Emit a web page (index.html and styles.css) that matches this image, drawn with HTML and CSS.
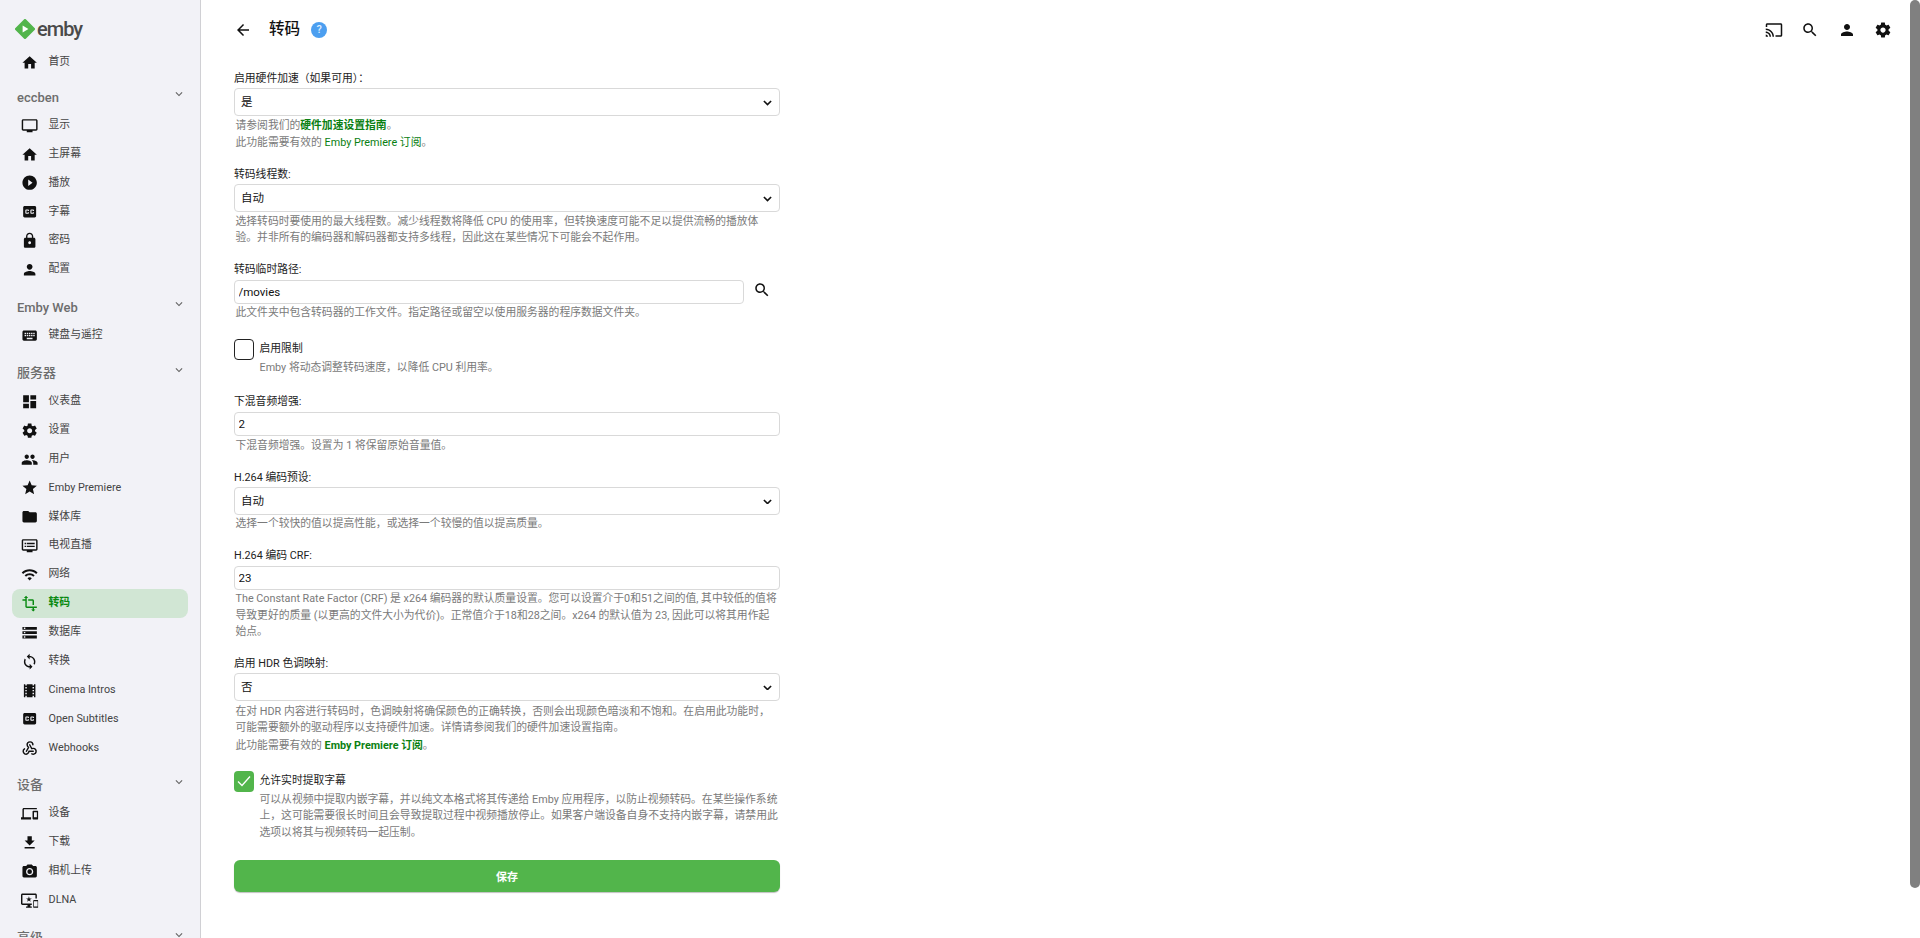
FILE: index.html
```html
<!DOCTYPE html>
<html lang="zh-CN">
<head>
<meta charset="utf-8">
<title>转码</title>
<link rel="stylesheet" href="styles.css">
</head>
<body>
<svg class="sprite" xmlns="http://www.w3.org/2000/svg">
<symbol id="i-home" viewBox="0 0 24 24"><path d="M10 20v-6h4v6h5v-8h3L12 3 2 12h3v8z"/></symbol>
<symbol id="i-tv" viewBox="0 0 24 24"><path d="M21 3H3c-1.1 0-2 .9-2 2v12c0 1.1.9 2 2 2h5v2h8v-2h5c1.1 0 1.99-.9 1.99-2L23 5c0-1.1-.9-2-2-2zm0 14H3V5h18v12z"/></symbol>
<symbol id="i-play" viewBox="0 0 24 24"><path d="M12 2C6.48 2 2 6.48 2 12s4.48 10 10 10 10-4.48 10-10S17.52 2 12 2zm-2 14.5v-9l6 4.5-6 4.5z"/></symbol>
<symbol id="i-cc" viewBox="0 0 24 24"><path d="M19 4H5c-1.11 0-2 .9-2 2v12c0 1.1.89 2 2 2h14c1.1 0 2-.9 2-2V6c0-1.1-.9-2-2-2zm-8 7H9.5v-.5h-2v3h2V13H11v1c0 .55-.45 1-1 1H7c-.55 0-1-.45-1-1v-4c0-.55.45-1 1-1h3c.55 0 1 .45 1 1v1zm7 0h-1.5v-.5h-2v3h2V13H18v1c0 .55-.45 1-1 1h-3c-.55 0-1-.45-1-1v-4c0-.55.45-1 1-1h3c.55 0 1 .45 1 1v1z"/></symbol>
<symbol id="i-lock" viewBox="0 0 24 24"><path d="M18 8h-1V6c0-2.76-2.24-5-5-5S7 3.24 7 6v2H6c-1.1 0-2 .9-2 2v10c0 1.1.9 2 2 2h12c1.1 0 2-.9 2-2V10c0-1.1-.9-2-2-2zm-6 9c-1.1 0-2-.9-2-2s.9-2 2-2 2 .9 2 2-.9 2-2 2zm3.1-9H8.9V6c0-1.71 1.39-3.1 3.1-3.1 1.71 0 3.1 1.39 3.1 3.1v2z"/></symbol>
<symbol id="i-person" viewBox="0 0 24 24"><path d="M12 12c2.21 0 4-1.79 4-4s-1.79-4-4-4-4 1.79-4 4 1.79 4 4 4zm0 2c-2.67 0-8 1.34-8 4v2h16v-2c0-2.66-5.33-4-8-4z"/></symbol>
<symbol id="i-keyboard" viewBox="0 0 24 24"><path d="M20 5H4c-1.1 0-1.99.9-1.99 2L2 17c0 1.1.9 2 2 2h16c1.1 0 2-.9 2-2V7c0-1.1-.9-2-2-2zm-9 3h2v2h-2V8zm0 3h2v2h-2v-2zM8 8h2v2H8V8zm0 3h2v2H8v-2zm-1 2H5v-2h2v2zm0-3H5V8h2v2zm9 7H8v-2h8v2zm0-4h-2v-2h2v2zm0-3h-2V8h2v2zm3 3h-2v-2h2v2zm0-3h-2V8h2v2z"/></symbol>
<symbol id="i-dashboard" viewBox="0 0 24 24"><path d="M3 13h8V3H3v10zm0 8h8v-6H3v6zm10 0h8V11h-8v10zm0-18v6h8V3h-8z"/></symbol>
<symbol id="i-settings" viewBox="0 0 24 24"><path d="M19.43 12.98c.04-.32.07-.64.07-.98s-.03-.66-.07-.98l2.11-1.65c.19-.15.24-.42.12-.64l-2-3.46c-.12-.22-.39-.3-.61-.22l-2.49 1c-.52-.4-1.08-.73-1.69-.98l-.38-2.65C14.46 2.18 14.25 2 14 2h-4c-.25 0-.46.18-.49.42l-.38 2.65c-.61.25-1.17.59-1.69.98l-2.49-1c-.23-.09-.49 0-.61.22l-2 3.46c-.13.22-.07.49.12.64l2.11 1.65c-.04.32-.07.65-.07.98s.03.66.07.98l-2.11 1.65c-.19.15-.24.42-.12.64l2 3.46c.12.22.39.3.61.22l2.49-1c.52.4 1.08.73 1.69.98l.38 2.65c.03.24.24.42.49.42h4c.25 0 .46-.18.49-.42l.38-2.65c.61-.25 1.17-.59 1.69-.98l2.49 1c.23.09.49 0 .61-.22l2-3.46c.12-.22.07-.49-.12-.64l-2.11-1.65zM12 15.5c-1.93 0-3.5-1.57-3.5-3.5s1.57-3.5 3.5-3.5 3.5 1.57 3.5 3.5-1.57 3.5-3.5 3.5z"/></symbol>
<symbol id="i-people" viewBox="0 0 24 24"><path d="M16 11c1.66 0 2.99-1.34 2.99-3S17.66 5 16 5c-1.66 0-3 1.34-3 3s1.34 3 3 3zm-8 0c1.66 0 2.99-1.34 2.99-3S9.66 5 8 5C6.34 5 5 6.34 5 8s1.34 3 3 3zm0 2c-2.33 0-7 1.17-7 3.5V19h14v-2.5c0-2.33-4.67-3.5-7-3.5zm8 0c-.29 0-.62.02-.97.05 1.16.84 1.97 1.97 1.97 3.45V19h6v-2.5c0-2.33-4.67-3.5-7-3.5z"/></symbol>
<symbol id="i-star" viewBox="0 0 24 24"><path d="M12 17.27L18.18 21l-1.64-7.03L22 9.24l-7.19-.61L12 2 9.19 8.63 2 9.24l5.46 4.73L5.82 21z"/></symbol>
<symbol id="i-folder" viewBox="0 0 24 24"><path d="M10 4H4c-1.1 0-1.99.9-1.99 2L2 18c0 1.1.9 2 2 2h16c1.1 0 2-.9 2-2V8c0-1.1-.9-2-2-2h-8l-2-2z"/></symbol>
<symbol id="i-dvr" viewBox="0 0 24 24"><path d="M21 3H3c-1.1 0-2 .9-2 2v12c0 1.1.9 2 2 2h5v2h8v-2h5c1.1 0 1.99-.9 1.99-2L23 5c0-1.1-.9-2-2-2zm0 14H3V5h18v12zm-2-9H8v2h11V8zm0 4H8v2h11v-2zM7 8H5v2h2V8zm0 4H5v2h2v-2z"/></symbol>
<symbol id="i-wifi" viewBox="0 0 24 24"><path d="M1 9l2 2c4.97-4.97 13.03-4.97 18 0l2-2C16.93 2.93 7.08 2.93 1 9zm8 8l3 3 3-3c-1.65-1.66-4.34-1.66-6 0zm-4-4l2 2c2.76-2.76 7.24-2.76 10 0l2-2C15.14 9.14 8.87 9.14 5 13z"/></symbol>
<symbol id="i-transform" viewBox="0 0 24 24"><path d="M22 18v-2H8V4h2L7 1 4 4h2v2H2v2h4v8c0 1.1.9 2 2 2h8v2h-2l3 3 3-3h-2v-2h4zM10 8h6v6h2V8c0-1.1-.9-2-2-2h-6v2z"/></symbol>
<symbol id="i-storage" viewBox="0 0 24 24"><path d="M2 20h20v-4H2v4zm2-3h2v2H4v-2zM2 4v4h20V4H2zm4 3H4V5h2v2zm-4 7h20v-4H2v4zm2-3h2v2H4v-2z"/></symbol>
<symbol id="i-sync" viewBox="0 0 24 24"><path d="M12 4V1L8 5l4 4V6c3.31 0 6 2.69 6 6 0 1.01-.25 1.97-.7 2.8l1.46 1.46C19.54 15.03 20 13.57 20 12c0-4.42-3.58-8-8-8zm0 14c-3.31 0-6-2.69-6-6 0-1.01.25-1.97.7-2.8L5.24 7.74C4.46 8.97 4 10.43 4 12c0 4.42 3.58 8 8 8v3l4-4-4-4v3z"/></symbol>
<symbol id="i-movie" viewBox="0 0 24 24"><path d="M18 3v2h-2V3H8v2H6V3H4v18h2v-2h2v2h8v-2h2v2h2V3h-2zM8 17H6v-2h2v2zm0-4H6v-2h2v2zm0-4H6V7h2v2zm10 8h-2v-2h2v2zm0-4h-2v-2h2v2zm0-4h-2V7h2v2z"/></symbol>
<symbol id="i-webhook" viewBox="0 0 24 24"><g fill="none" stroke="currentColor" stroke-width="2" stroke-linecap="round" stroke-linejoin="round"><path d="M4.876 13.61a4 4 0 1 0 6.124 3.39h6"/><path d="M15.066 20.502a4 4 0 1 0 1.934 -7.502c-.706 0 -1.424 .179 -2 .5l-3 -5.5"/><path d="M16.5 8a4 4 0 1 0 -8 0c0 1.506 .77 2.818 2 3.5l-3 5.5"/></g></symbol>
<symbol id="i-devices" viewBox="0 0 24 24"><path d="M4 6h18V4H4c-1.1 0-2 .9-2 2v11H0v3h14v-3H4V6zm19 2h-6c-.55 0-1 .45-1 1v10c0 .55.45 1 1 1h6c.55 0 1-.45 1-1V9c0-.55-.45-1-1-1zm-1 9h-4v-7h4v7z"/></symbol>
<symbol id="i-download" viewBox="0 0 24 24"><path d="M19 9h-4V3H9v6H5l7 7 7-7zM5 18v2h14v-2H5z"/></symbol>
<symbol id="i-camera" viewBox="0 0 24 24"><path d="M12 15.2a3.2 3.2 0 1 0 0-6.4 3.2 3.2 0 0 0 0 6.4z"/><path d="M9 2L7.17 4H4c-1.1 0-2 .9-2 2v12c0 1.1.9 2 2 2h16c1.1 0 2-.9 2-2V6c0-1.1-.9-2-2-2h-3.17L15 2H9zm3 15c-2.76 0-5-2.24-5-5s2.24-5 5-5 5 2.24 5 5-2.24 5-5 5z"/></symbol>
<symbol id="i-dlna" viewBox="0 0 24 24"><path d="M23 11.01L18 11c-.55 0-1 .45-1 1v9c0 .55.45 1 1 1h5c.55 0 1-.45 1-1v-9c0-.55-.45-.99-1-.99zM23 20h-5v-7h5v7zM20 2H2C.89 2 0 2.89 0 4v12c0 1.1.89 2 2 2h7v2H7v2h8v-2h-2v-2h2v-2H2V4h18v5h2V4c0-1.11-.9-2-2-2zm-8.03 7L11 6l-.97 3H7l2.47 1.76-.94 2.91 2.47-1.8 2.47 1.8-.94-2.91L15 9h-3.03z"/></symbol>
<symbol id="i-cast" viewBox="0 0 24 24"><path d="M21 3H3c-1.1 0-2 .9-2 2v3h2V5h18v14h-7v2h7c1.1 0 2-.9 2-2V5c0-1.1-.9-2-2-2zM1 18v3h3c0-1.66-1.34-3-3-3zm0-4v2c2.76 0 5 2.24 5 5h2c0-3.87-3.13-7-7-7zm0-4v2c4.97 0 9 4.03 9 9h2c0-6.08-4.93-11-11-11z"/></symbol>
<symbol id="i-search" viewBox="0 0 24 24"><path d="M15.5 14h-.79l-.28-.27C15.41 12.59 16 11.11 16 9.5 16 5.91 13.09 3 9.5 3S3 5.91 3 9.5 5.91 16 9.5 16c1.61 0 3.09-.59 4.23-1.57l.27.28v.79l5 4.99L20.49 19l-4.99-5zm-6 0C7.01 14 5 11.99 5 9.5S7.01 5 9.5 5 14 7.01 14 9.5 11.99 14 9.5 14z"/></symbol>
<symbol id="i-back" viewBox="0 0 24 24"><path d="M20 11H7.83l5.59-5.59L12 4l-8 8 8 8 1.41-1.41L7.83 13H20v-2z"/></symbol>
<symbol id="i-more" viewBox="0 0 24 24"><path d="M16.59 8.59L12 13.17 7.41 8.59 6 10l6 6 6-6z"/></symbol>
</svg>

<div class="app">
  <nav class="sidebar">
    <div class="logo">
      <svg class="logo-mark" viewBox="0 0 20 20"><path class="logo-diamond" d="M10 1.5L18.5 10 10 18.5 1.5 10z"/><path class="logo-play" d="M7.6 6.4l5.8 3.6-5.8 3.6z"/></svg>
      <span class="logo-text">emby</span>
    </div>
    <a class="item"><svg class="ico"><use href="#i-home"/></svg><span>首页</span></a>

    <div class="sec-head"><span>eccben</span><svg class="chev"><use href="#i-more"/></svg></div>
    <a class="item"><svg class="ico"><use href="#i-tv"/></svg><span>显示</span></a>
    <a class="item"><svg class="ico"><use href="#i-home"/></svg><span>主屏幕</span></a>
    <a class="item"><svg class="ico"><use href="#i-play"/></svg><span>播放</span></a>
    <a class="item"><svg class="ico"><use href="#i-cc"/></svg><span>字幕</span></a>
    <a class="item"><svg class="ico"><use href="#i-lock"/></svg><span>密码</span></a>
    <a class="item"><svg class="ico"><use href="#i-person"/></svg><span>配置</span></a>

    <div class="sec-head"><span>Emby Web</span><svg class="chev"><use href="#i-more"/></svg></div>
    <a class="item"><svg class="ico"><use href="#i-keyboard"/></svg><span>键盘与遥控</span></a>

    <div class="sec-head sec-cjk"><span>服务器</span><svg class="chev"><use href="#i-more"/></svg></div>
    <a class="item"><svg class="ico"><use href="#i-dashboard"/></svg><span>仪表盘</span></a>
    <a class="item"><svg class="ico"><use href="#i-settings"/></svg><span>设置</span></a>
    <a class="item"><svg class="ico"><use href="#i-people"/></svg><span>用户</span></a>
    <a class="item"><svg class="ico"><use href="#i-star"/></svg><span>Emby Premiere</span></a>
    <a class="item"><svg class="ico"><use href="#i-folder"/></svg><span>媒体库</span></a>
    <a class="item"><svg class="ico"><use href="#i-dvr"/></svg><span>电视直播</span></a>
    <a class="item"><svg class="ico"><use href="#i-wifi"/></svg><span>网络</span></a>
    <a class="item active"><svg class="ico"><use href="#i-transform"/></svg><span>转码</span></a>
    <a class="item"><svg class="ico"><use href="#i-storage"/></svg><span>数据库</span></a>
    <a class="item"><svg class="ico"><use href="#i-sync"/></svg><span>转换</span></a>
    <a class="item"><svg class="ico"><use href="#i-movie"/></svg><span>Cinema Intros</span></a>
    <a class="item"><svg class="ico"><use href="#i-cc"/></svg><span>Open Subtitles</span></a>
    <a class="item"><svg class="ico"><use href="#i-webhook"/></svg><span>Webhooks</span></a>

    <div class="sec-head sec-cjk"><span>设备</span><svg class="chev"><use href="#i-more"/></svg></div>
    <a class="item"><svg class="ico"><use href="#i-devices"/></svg><span>设备</span></a>
    <a class="item"><svg class="ico"><use href="#i-download"/></svg><span>下载</span></a>
    <a class="item"><svg class="ico"><use href="#i-camera"/></svg><span>相机上传</span></a>
    <a class="item"><svg class="ico"><use href="#i-dlna"/></svg><span>DLNA</span></a>

    <div class="sec-head sec-cjk"><span>高级</span><svg class="chev"><use href="#i-more"/></svg></div>
  </nav>

  <main class="main">
    <header class="topbar">
      <svg class="back"><use href="#i-back"/></svg>
      <h1 class="title">转码</h1>
      <span class="help-badge">?</span>
      <div class="top-actions">
        <svg class="top-ico"><use href="#i-cast"/></svg>
        <svg class="top-ico"><use href="#i-search"/></svg>
        <svg class="top-ico"><use href="#i-person"/></svg>
        <svg class="top-ico"><use href="#i-settings"/></svg>
      </div>
    </header>

    <form class="form">
      <div class="field">
        <label class="lbl">启用硬件加速（如果可用）：</label>
        <div class="select-wrap"><select class="control select"><option>是</option></select><svg class="select-arrow" viewBox="0 0 10 6"><path d="M1 1l4 4 4-4"/></svg></div>
        <div class="hint">请参阅我们的<a class="link strong">硬件加速设置指南</a>。</div>
        <div class="hint hint-gap">此功能需要有效的 <a class="link">Emby Premiere 订阅</a>。</div>
      </div>

      <div class="field">
        <label class="lbl">转码线程数:</label>
        <div class="select-wrap"><select class="control select"><option>自动</option></select><svg class="select-arrow" viewBox="0 0 10 6"><path d="M1 1l4 4 4-4"/></svg></div>
        <div class="hint hint-tight">选择转码时要使用的最大线程数。减少线程数将降低 CPU 的使用率，但转换速度可能不足以提供流畅的播放体验。并非所有的编码器和解码器都支持多线程，因此这在某些情况下可能会不起作用。</div>
      </div>

      <div class="field field-input">
        <label class="lbl">转码临时路径:</label>
        <div class="path-row"><input class="control input" value="/movies"><svg class="path-search"><use href="#i-search"/></svg></div>
        <div class="hint">此文件夹中包含转码器的工作文件。指定路径或留空以使用服务器的程序数据文件夹。</div>
      </div>

      <div class="check-field">
        <span class="box"></span>
        <div class="check-body">
          <div class="check-label">启用限制</div>
          <div class="hint hint-check">Emby 将动态调整转码速度，以降低 CPU 利用率。</div>
        </div>
      </div>

      <div class="field field-input">
        <label class="lbl">下混音频增强:</label>
        <input class="control input" value="2">
        <div class="hint">下混音频增强。设置为 1 将保留原始音量值。</div>
      </div>

      <div class="field">
        <label class="lbl">H.264 编码预设:</label>
        <div class="select-wrap"><select class="control select"><option>自动</option></select><svg class="select-arrow" viewBox="0 0 10 6"><path d="M1 1l4 4 4-4"/></svg></div>
        <div class="hint">选择一个较快的值以提高性能，或选择一个较慢的值以提高质量。</div>
      </div>

      <div class="field field-input">
        <label class="lbl">H.264 编码 CRF:</label>
        <input class="control input" value="23">
        <div class="hint">The Constant Rate Factor (CRF) 是 x264 编码器的默认质量设置。您可以设置介于0和51之间的值, 其中较低的值将导致更好的质量 (以更高的文件大小为代价)。正常值介于18和28之间。x264 的默认值为 23, 因此可以将其用作起始点。</div>
      </div>

      <div class="field field-hdr">
        <label class="lbl">启用 HDR 色调映射:</label>
        <div class="select-wrap"><select class="control select"><option>否</option></select><svg class="select-arrow" viewBox="0 0 10 6"><path d="M1 1l4 4 4-4"/></svg></div>
        <div class="hint">在对 HDR 内容进行转码时，色调映射将确保颜色的正确转换，否则会出现颜色暗淡和不饱和。在启用此功能时，可能需要额外的驱动程序以支持硬件加速。详情请参阅我们的硬件加速设置指南。</div>
        <div class="hint">此功能需要有效的 <a class="link strong">Emby Premiere 订阅</a>。</div>
      </div>

      <div class="check-field checked-field">
        <span class="box checked"><svg class="tick" viewBox="0 0 20 20"><path d="M4 10.5l4 4 8-9"/></svg></span>
        <div class="check-body">
          <div class="check-label">允许实时提取字幕</div>
          <div class="hint hint-check">可以从视频中提取内嵌字幕，并以纯文本格式将其传递给 Emby 应用程序，以防止视频转码。在某些操作系统上，这可能需要很长时间且会导致提取过程中视频播放停止。如果客户端设备自身不支持内嵌字幕，请禁用此选项以将其与视频转码一起压制。</div>
        </div>
      </div>

      <button class="save" type="button">保存</button>
    </form>
  </main>
  <div class="scrollbar"></div>
</div>
</body>
</html>
```

FILE: styles.css
```css
* { box-sizing: border-box; }
html, body { margin: 0; height: 938px; overflow: hidden; background: #fff; }
body { font-family: Roboto, "Noto Sans CJK SC", sans-serif; color: #111; font-size: 10.8px; }
.sprite { display: none; }

.app { display: flex; height: 938px; position: relative; }

/* sidebar */
.sidebar { width: 201px; flex: none; height: 938px; overflow: hidden; background: #f2f2f7; border-right: 1px solid #d0d0d4; padding: 0 12px; }
.logo { display: flex; align-items: center; height: 48px; padding: 10px 0 0 3px; gap: 2px; }
.logo-mark { width: 20px; height: 20px; flex: none; }
.logo-diamond { fill: #52b54b; stroke: #52b54b; stroke-width: 3; stroke-linejoin: round; }
.logo-play { fill: #fff; }
.logo-text { font-family: Roboto, sans-serif; font-size: 20px; font-weight: 500; color: #4a4a4a; letter-spacing: -1px; line-height: 20px; }
.item { display: flex; align-items: center; height: 28.88px; padding-left: 9.4px; color: #444; line-height: 1; border-radius: 8px; }
.ico { width: 17.3px; height: 17.3px; flex: none; fill: #111; color: #111; margin-right: 9.9px; }
.item.active { background: #d1e6d4; color: #0a8a12; font-weight: 700; }
.item.active .ico { fill: #0a8a12; }
.sec-head { display: flex; justify-content: space-between; height: 25px; margin-top: 12px; padding-left: 5px; font-size: 12.96px; line-height: 23px; color: #6d6d6d; font-weight: 500; }
.sec-cjk { line-height: 21px; }
.logo + .item + .sec-head { margin-top: 9px; }
.chev { width: 14px; height: 14px; margin: 1px 2px 0 0; fill: #666; }

/* main */
.main { flex: 1; min-width: 0; padding-left: 33px; }
.topbar { display: flex; align-items: center; height: 60px; padding-right: 28px; }
.back { width: 18px; height: 18px; fill: #111; }
.title { margin: 0 0 0 17px; font-size: 15.6px; font-weight: 500; color: #111; line-height: 1; }
.help-badge { width: 16px; height: 16px; border-radius: 50%; background: #4c9ff0; color: #dfeeff; margin-left: 11px; font-size: 11px; font-weight: 500; line-height: 16px; text-align: center; }
.top-actions { display: flex; margin-left: auto; gap: 18.5px; }
.top-ico { width: 18px; height: 18px; fill: #111; }

.form { width: 546px; padding-top: 11px; display: flex; flex-direction: column; }
.field { margin-bottom: 15.5px; }
.lbl { display: block; line-height: 16px; margin-bottom: 1px; color: #222; }
.field-input .lbl { margin-bottom: 2px; }
.select-wrap { position: relative; }
.control { display: block; width: 100%; border: 1px solid #d9d9d9; border-radius: 4px; background: #fff; color: #111; font-family: inherit; outline: 0; margin: 0; }
.select { height: 28px; appearance: none; -webkit-appearance: none; font-size: 11.5px; padding: 0 24px 0 6px; }
.input { height: 24px; font-size: 11.5px; padding: 0 3.5px; }
.select-arrow { position: absolute; right: 8px; top: 12px; width: 9px; height: 5.5px; fill: none; stroke: #111; stroke-width: 1.8; }
.path-row { display: flex; align-items: center; }
.path-row .input { width: 510px; flex: none; }
.path-search { width: 18px; height: 18px; fill: #111; margin-left: 9px; margin-top: -4px; }
.hint { color: #7a7a7a; line-height: 16.3px; padding-left: 1.5px; margin-top: 1.5px; }
.hint-tight { max-width: 535px; }
.field-hdr { margin-bottom: 14px; }
.field-hdr .select-wrap + .hint { margin-top: 3px; }
.hint-gap { margin-top: 1.5px; }
.link { color: #0a8012; }
.strong { font-weight: 700; }

.check-field { display: flex; margin: 2px 0 18px; }
.box { width: 20px; height: 21px; flex: none; border: 1.4px solid #222; border-radius: 4px; margin-right: 5.5px; }
.box.checked { background: #52b54b; border: 0; }
.tick { display: block; width: 20px; height: 20px; fill: none; stroke: #fff; stroke-width: 1.3; }
.check-body { flex: 1; min-width: 0; }
.check-label { line-height: 14px; margin-top: 3px; color: #222; }
.hint-check { padding-left: 0; margin-top: 4px; }
.checked-field { margin: 3px 0 18.5px; }

.save { width: 100%; height: 32px; border: 0; border-radius: 6px; background: #52b54b; color: #fff; font-family: inherit; font-size: 11px; font-weight: 700; box-shadow: 0 1px 1px rgba(0,0,0,.25); padding: 0; }

.scrollbar { position: absolute; right: 0; top: 0; width: 10px; height: 888px; background: #808080; border-radius: 5px; }
```
